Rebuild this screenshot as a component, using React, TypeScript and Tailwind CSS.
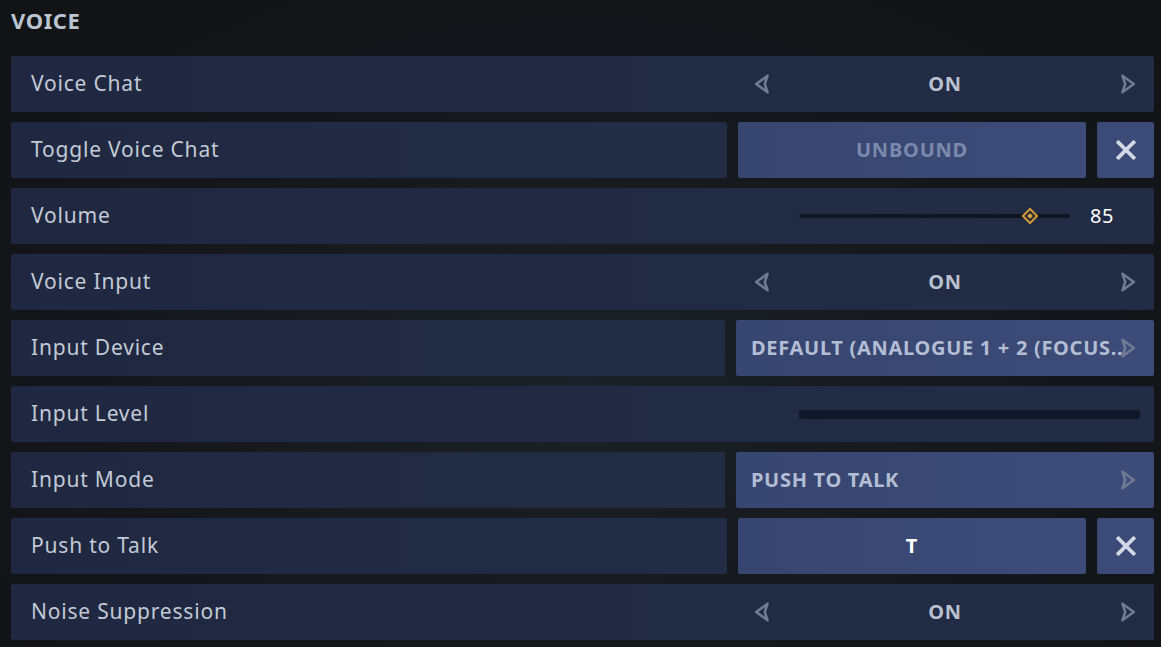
import React from "react";

const font = { fontFamily: '"Noto Sans", "Liberation Sans", sans-serif' };

function ArrowL() {
  return (
    <svg width="16" height="20" viewBox="0 0 16 20" fill="none">
      <path d="M13.5 1.8 L2.2 10 L13.5 18.2 L10.8 10 Z" stroke="#6f7a93" strokeWidth="2.6" strokeLinejoin="round" />
    </svg>
  );
}
function ArrowR() {
  return (
    <svg width="16" height="20" viewBox="0 0 16 20" fill="none">
      <path d="M2.5 1.8 L13.8 10 L2.5 18.2 L5.2 10 Z" stroke="#6f7a93" strokeWidth="2.6" strokeLinejoin="round" />
    </svg>
  );
}
function XIcon() {
  return (
    <svg width="20" height="20" viewBox="0 0 20 20">
      <path d="M2.5 2.5 L17.5 17.5 M17.5 2.5 L2.5 17.5" stroke="#d3d9e4" strokeWidth="3.8" strokeLinecap="square" />
    </svg>
  );
}

function Label({ text }: { text: string }) {
  return <span className="pl-5 text-[21px] tracking-[0.8px] text-[#c3c9d5]">{text}</span>;
}

const rowBg = "bg-gradient-to-r from-[#1f2840] to-[#222c44] rounded-[2px]";
const btnBg = "bg-gradient-to-r from-[#374670] to-[#3d4b78] rounded-[2px]";

function ToggleRow({ label }: { label: string }) {
  return (
    <div className={"h-14 flex items-center " + rowBg}>
      <div className="flex-1"><Label text={label} /></div>
      <div className="w-[400px] mr-[9px] flex items-center justify-between px-[9px]">
        <ArrowL />
        <span className="text-[20px] font-bold text-[#b9c1d1] tracking-[0.8px]">ON</span>
        <ArrowR />
      </div>
    </div>
  );
}

function BindRow({ label, value, muted }: { label: string; value: string; muted?: boolean }) {
  return (
    <div className="h-14 flex gap-[11px]">
      <div className={"w-[716px] flex items-center " + rowBg}>
        <Label text={label} />
      </div>
      <div className={"w-[348px] flex items-center justify-center " + btnBg}>
        <span className={"text-[20px] font-bold tracking-[0.8px] " + (muted ? "text-[#7b89ad]" : "text-white")}>{value}</span>
      </div>
      <div className="flex-1 flex items-center justify-center bg-[#3c4a78] rounded-[2px]">
        <XIcon />
      </div>
    </div>
  );
}

function SelectRow({ label, value }: { label: string; value: string }) {
  return (
    <div className="h-14 flex gap-[11px]">
      <div className={"w-[714px] flex items-center " + rowBg}>
        <Label text={label} />
      </div>
      <div className={"flex-1 flex items-center justify-between pl-[15px] pr-[18px] min-w-0 " + btnBg}>
        <span className="text-[20px] font-bold text-[#b3bdd3] tracking-[0.7px] whitespace-nowrap overflow-hidden">{value}</span>
        <span className="shrink-0 -ml-[6px]"><ArrowR /></span>
      </div>
    </div>
  );
}

export default function App() {
  return (
    <div style={font} className="w-[1161px] h-[647px] overflow-hidden bg-[radial-gradient(ellipse_at_50%_60%,#1c2129_0%,#14171b_55%,#111315_100%)]">
      <div className="pl-[11px] pr-[7px]">
        <div className="h-14 flex items-center pb-[16px]">
          <span className="text-[22px] font-bold text-[#bcc4d2] tracking-[0.6px]">VOICE</span>
        </div>
        <div className="flex flex-col gap-[10px]">
          <ToggleRow label="Voice Chat" />
          <BindRow label="Toggle Voice Chat" value="UNBOUND" muted />
          <div className={"h-14 flex items-center " + rowBg}>
            <div className="flex-1"><Label text="Volume" /></div>
            <div className="w-[271px] h-[4px] bg-[#0e1420] rounded-full relative mr-[20px]">
              <div className="absolute left-[231px] top-1/2 -translate-x-1/2 -translate-y-1/2 w-[12px] h-[12px] rotate-45 border-2 border-[#d19a3a] bg-[#2a2a2e] flex items-center justify-center">
                <div className="w-[4px] h-[4px] bg-[#d9a545]" />
              </div>
            </div>
            <span className="w-[64px] text-[20px] tracking-[0.5px] text-white">85</span>
          </div>
          <ToggleRow label="Voice Input" />
          <SelectRow label="Input Device" value="DEFAULT (ANALOGUE 1 + 2 (FOCUS.." />
          <div className={"h-14 flex items-center " + rowBg}>
            <div className="flex-1"><Label text="Input Level" /></div>
            <div className="w-[341px] h-[9px] bg-[#0f1728] rounded-[2px] mr-[14px]" />
          </div>
          <SelectRow label="Input Mode" value="PUSH TO TALK" />
          <BindRow label="Push to Talk" value="T" />
          <ToggleRow label="Noise Suppression" />
        </div>
      </div>
    </div>
  );
}
